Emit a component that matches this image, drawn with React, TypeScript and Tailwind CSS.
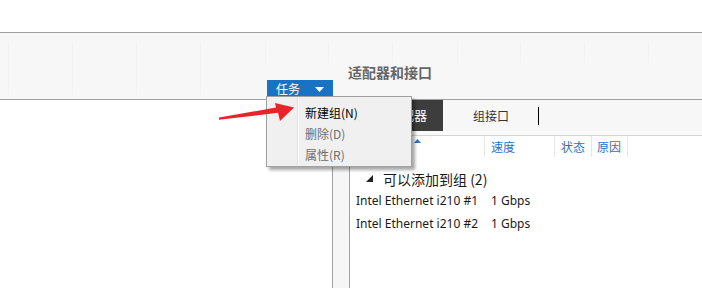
// faint vertical marks in the header band
const headerMarks = [
  { x: 8, tall: true },
  { x: 72, tall: true },
  { x: 136, tall: true },
  { x: 200, tall: true },
  { x: 265, tall: false },
  { x: 328, tall: false },
  { x: 392, tall: false },
  { x: 457, tall: false },
  { x: 520, tall: false },
  { x: 584, tall: false },
  { x: 648, tall: false },
];

const adapters = [
  { name: "Intel Ethernet i210 #1", speed: "1 Gbps" },
  { name: "Intel Ethernet i210 #2", speed: "1 Gbps" },
];

const menuItems = [
  { label: "新建组(N)", enabled: true },
  { label: "删除(D)", enabled: false },
  { label: "属性(R)", enabled: false },
];

export default function App() {
  return (
    <div className="relative w-[702px] h-[288px] overflow-hidden bg-white font-['Noto_Sans','Noto_Sans_CJK_SC',sans-serif] text-[#1a1a1a]">
      {/* top blank strip */}
      <div className="h-[32px] bg-white" />

      {/* Header band */}
      <div className="relative flex h-[68px] border-y border-[#a0a0a0] bg-[#f7f7f7]">
        <div className="pointer-events-none absolute inset-0">
          {headerMarks.map((m) => (
            <div
              key={m.x}
              className={`absolute top-[9px] w-px bg-[#f2f2f2] ${m.tall ? "h-[53px]" : "h-[21px]"}`}
              style={{ left: m.x }}
            />
          ))}
        </div>

        <div className="relative flex w-[333px] items-end justify-end pb-px">
          <button className="flex h-[18px] w-[66px] items-center bg-[#1873c4] pl-[9px] text-[12px] leading-none text-white">
            <span className="font-['Noto_Sans_CJK_SC',sans-serif]">任务</span>
            <svg width="9" height="5" viewBox="0 0 9 5" className="ml-[15px]">
              <polygon points="0,0 9,0 4.5,5" fill="#ffffff" />
            </svg>
          </button>
        </div>
        <div className="relative w-[15px]" />
        <div className="relative pt-[29px]">
          <h1 className="font-['Noto_Sans_CJK_SC',sans-serif] text-[14px] font-bold leading-[20px] text-[#666666]">
            适配器和接口
          </h1>
        </div>
      </div>

      {/* Body */}
      <div className="flex h-[188px]">
        <div className="w-[333px] border-r border-[#a0a0a0] bg-white" />
        <div className="w-[17px] border-r border-[#a0a0a0] bg-[#f6f6f6]" />

        <div className="flex-1 bg-white">
          {/* tab strip */}
          <div className="flex h-[31px] items-center bg-[#f7f7f7]">
            <div className="ml-[22px] flex h-[33px] -mt-[2px] items-center bg-[#3d3d3d] px-4 font-['Noto_Sans_CJK_SC',sans-serif] text-[13px] text-white">
              适配器
            </div>
            <div className="pl-[30px] pr-[29px] font-['Noto_Sans_CJK_SC',sans-serif] text-[12px] text-[#333333]">
              组接口
            </div>
            <div className="h-[18px] w-px bg-black" />
          </div>
          <div className="h-[5px] border-b border-[#d3d3d3] bg-[#fbfbfb]" />

          {/* column headers */}
          <div className="grid h-[21px] grid-cols-[135px_70px_37px_36px] font-['Noto_Sans_CJK_SC',sans-serif] text-[12px] leading-[16px] text-[#2b72c4]">
            <div className="flex justify-center border-r border-[#e6e6e6] pt-[3px]">
              <svg width="7" height="4" viewBox="0 0 7 4">
                <polygon points="0,4 7,4 3.5,0" fill="#2b72c4" />
              </svg>
            </div>
            <div className="border-r border-[#e6e6e6] pl-[6px] pt-[3px]">速度</div>
            <div className="border-r border-[#e6e6e6] pl-[6px] pt-[3px]">状态</div>
            <div className="border-r border-[#e6e6e6] pl-[5px] pt-[3px]">原因</div>
          </div>

          {/* group */}
          <div className="mt-[11px] flex h-[21px] items-center pl-[16px]">
            <svg width="7" height="7" viewBox="0 0 7 7">
              <polygon points="7,0 7,7 0,7" fill="#222222" />
            </svg>
            <span className="ml-[10px] font-['Noto_Sans_CJK_SC',sans-serif] text-[14px] leading-[20px] text-[#1a1a1a]">
              可以添加到组 (2)
            </span>
          </div>

          {adapters.map((a) => (
            <div key={a.name} className="grid h-[23px] grid-cols-[135px_1fr] items-center text-[12px] text-[#1a1a1a]">
              <div className="pl-[6px]">{a.name}</div>
              <div className="pl-[6px]">{a.speed}</div>
            </div>
          ))}
        </div>
      </div>

      {/* Tasks dropdown menu */}
      <div className="absolute left-[266px] top-[96px] flex h-[71px] w-[146px] border border-[#a0a0a0] bg-[#f0f0f0] shadow-[3px_3px_3px_rgba(0,0,0,0.35)]">
        <div className="w-[31px] border-r border-[#dedede]" />
        <div className="border-l border-white pl-[6px] pt-[5px] font-['Noto_Sans_CJK_SC',sans-serif] text-[12px]">
          {menuItems.map((item) => (
            <div
              key={item.label}
              className={`flex h-[21px] items-center ${item.enabled ? "text-black" : "text-[#6d6d6d]"}`}
            >
              {item.label}
            </div>
          ))}
        </div>
      </div>

      {/* red annotation arrow */}
      <svg className="absolute left-[218px] top-[100px]" width="80" height="24" viewBox="0 0 80 24">
        <polygon points="1,17.5 58,7.6 57,3 76,7.5 62,21 60,12.8 1,19.8" fill="#e8232a" />
      </svg>
    </div>
  );
}
